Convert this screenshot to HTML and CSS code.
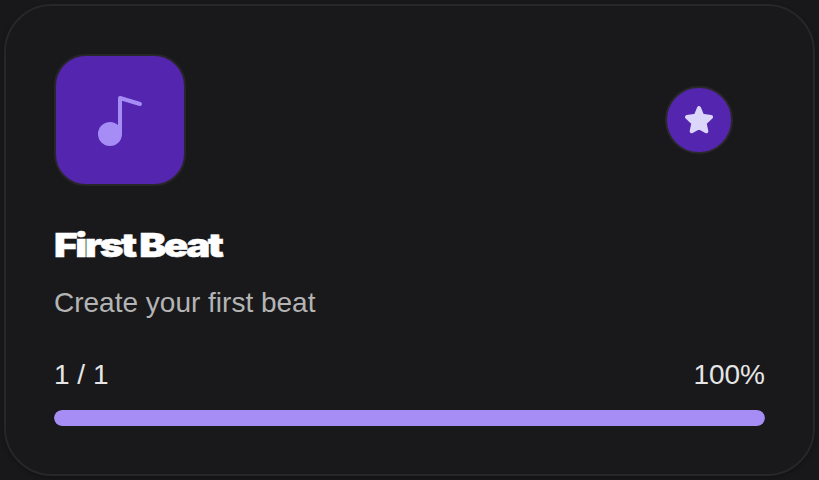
FILE: index.html
```html
<!DOCTYPE html>
<html lang="en">
<head>
<meta charset="utf-8">
<title>First Beat</title>
<link rel="stylesheet" href="styles.css">
</head>
<body>
<article class="card">
  <header class="card-head">
    <div class="tile">
      <svg class="note" viewBox="0 0 24 24" fill="none" stroke="currentColor" stroke-width="2" stroke-linecap="round" stroke-linejoin="round"><circle cx="7" cy="19" r="6" fill="currentColor" stroke="none"/><path d="M12 19V1L22 4"/></svg>
    </div>
    <div class="badge">
      <svg class="star" viewBox="0 0 28 28" fill="currentColor" stroke="currentColor" stroke-width="4" stroke-linejoin="round"><path d="M14 2L17.2 9.8L26 11L19.6 17L21.3 25.2L14 21.3L6.7 25.2L8.4 17L2 11L10.8 9.8Z"/></svg>
    </div>
  </header>
  <h2 class="title"><span class="title-text">First Beat</span></h2>
  <p class="desc">Create your first beat</p>
  <div class="stats"><span>1 / 1</span><span>100%</span></div>
  <div class="track"><div class="fill" style="width:100%"></div></div>
</article>
</body>
</html>
```

FILE: styles.css
```css
* { box-sizing: border-box; }
body {
  margin: 0;
  padding: 4px;
  height: 480px;
  overflow: hidden;
  background: #18181a;
  font-family: "Liberation Sans", Arial, sans-serif;
}
.card {
  height: 472px;
  padding: 48px;
  border: 2px solid #27272a;
  border-radius: 48px;
  background: #19191b;
  box-shadow: 0 2px 4px rgba(0, 0, 0, .25);
}
.card-head {
  display: flex;
  align-items: center;
  justify-content: space-between;
  height: 132px;
  padding-right: 32px;
}
.tile {
  display: grid;
  place-items: center;
  width: 132px;
  height: 132px;
  border: 2px solid #27272a;
  border-radius: 32px;
  background: #5425ae;
  color: #a68df6;
}
.note { width: 48px; height: 48px; overflow: visible; }
.badge {
  display: grid;
  place-items: center;
  width: 68px;
  height: 68px;
  border: 2px solid #29292c;
  border-radius: 50%;
  background: #5425ae;
  color: #ddd6fb;
}
.star { width: 28px; height: 28px; }
.title {
  margin: 39px 0 0;
  height: 40px;
  font: 900 33px/40px Inter, sans-serif;
  letter-spacing: -2px;
  word-spacing: -1px;
  color: #fff;
}
.title-text {
  display: inline-block;
  transform: scaleX(1.225);
  transform-origin: left;
  white-space: nowrap;
  -webkit-text-stroke: .5px #fff;
}
.desc {
  margin: 18px 0 0;
  font-size: 28px;
  line-height: 40px;
  color: #b4b4b4;
}
.stats {
  display: flex;
  justify-content: space-between;
  margin-top: 32px;
  font-size: 28px;
  line-height: 40px;
  color: #e6e6e6;
}
.track {
  height: 16px;
  margin-top: 15px;
  border-radius: 8px;
  overflow: hidden;
  background: #27272a;
}
.fill { height: 100%; border-radius: 8px; background: #a68df6; }
```
